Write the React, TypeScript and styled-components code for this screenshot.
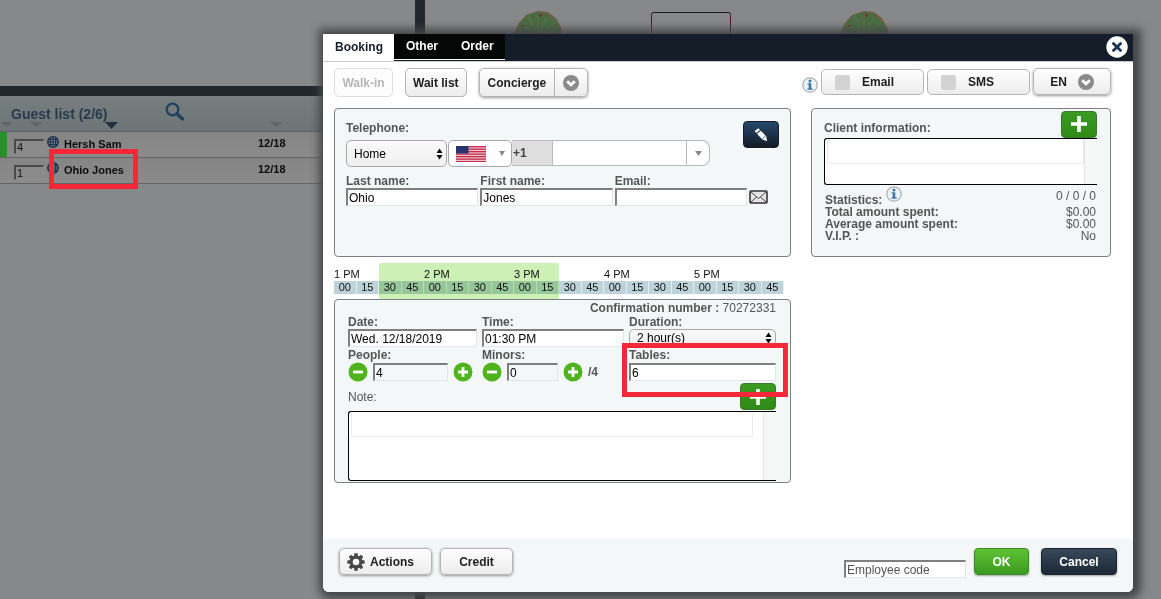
import React from "react";
import styled, { createGlobalStyle, css } from "styled-components";

const GlobalStyle = createGlobalStyle`
  *, *::before, *::after { box-sizing: border-box; }
  body {
    margin: 0;
    background: #87888a;
    color: #555;
    font-family: "Liberation Sans", Arial, Helvetica, sans-serif;
    font-size: 12px;
    line-height: 14px;
  }
  button, input, select, textarea { font: inherit; margin: 0; }
  button { cursor: pointer; }
`;

/* ---------- dimmed page ---------- */

const Page = styled.div`
  position: relative;
  display: flex;
  min-height: 100vh;
  overflow: hidden;
`;

const Sidebar = styled.aside`
  flex: 0 0 415px;
  padding-top: 86px;
`;

const Divider = styled.div`
  flex: 0 0 10px;
  background: #22272e;
`;

const Floor = styled.main`
  position: relative;
  flex: 1;
  overflow: hidden;
`;

const Cactus = styled.svg<{ $x: number }>`
  position: absolute;
  left: ${(p) => p.$x}px;
  top: 10px;
`;

const FloorTable = styled.div`
  position: absolute;
  left: 226px;
  top: 12px;
  width: 80px;
  height: 60px;
  border: 1px solid #1c1c20;
  border-radius: 3px;
  border-left-color: #4a1c26;
  border-right-color: #4a1c26;
`;

const GuestHeader = styled.header`
  height: 46px;
  padding-top: 10px;
  border-top: 10px solid #22272e;
  border-bottom: 1px solid #5b5f60;
  background: linear-gradient(#767e80, #6d7576);
`;

const GuestTitleRow = styled.div`
  display: flex;
  align-items: flex-start;
  gap: 58px;
  height: 16px;
  padding-left: 11px;
`;

const GuestTitle = styled.h2`
  margin: 0;
  color: #29394c;
  font-size: 14px;
  line-height: 16px;
`;

const IconButton = styled.button`
  display: inline-flex;
  flex: none;
  padding: 0;
  border: 0;
  background: none;
`;

const SearchButton = styled(IconButton)`
  height: 20px;
  margin-top: -4px;
`;

const SortRow = styled.div`
  display: grid;
  grid-template-columns: 30px 75px 165px 1fr;
`;

const SortMark = styled.span<{ $active?: boolean }>`
  width: 13px;
  height: ${(p) => (p.$active ? 7 : 5)}px;
  clip-path: polygon(0 0, 100% 0, 50% 100%);
  background: ${(p) => (p.$active ? "#232f3d" : "#5f6769")};
`;

const GuestTable = styled.table`
  width: 100%;
  border-collapse: separate;
  border-spacing: 0;
  table-layout: fixed;
  color: #0c0c0e;
  font-size: 11px;
  font-weight: bold;
  td {
    height: 26px;
    padding: 0;
    border-bottom: 1px solid #626466;
    background: linear-gradient(#858585, #8b8b8b);
    vertical-align: middle;
  }
  td:nth-child(n + 3) { padding-bottom: 3px; }
`;

const StatusBar = styled.div<{ $on: boolean }>`
  width: 7px;
  height: 25px;
  background: ${(p) => (p.$on ? "#26902a" : "transparent")};
`;

const PartyInput = styled.input`
  display: block;
  width: 30px;
  height: 15px;
  margin-top: 3px;
  padding: 0 1px;
  border: solid;
  border-width: 2px 1px 1px 2px;
  border-color: #4a4a4a #8f8f8f #8f8f8f #4a4a4a;
  background: #8a8a8a;
  color: #111;
  font-weight: normal;
`;

const NameCell = styled.div`
  position: relative;
  display: flex;
  align-items: center;
  gap: 5px;
  padding-left: 1px;
  svg { margin-bottom: 2px; }
  span { padding-top: 2px; }
`;

const GuestCallout = styled.div`
  position: absolute;
  left: 3px;
  top: -12px;
  width: 89px;
  height: 40px;
  border: 5px solid #f52839;
`;

/* ---------- dialog ---------- */

const Overlay = styled.div`
  position: absolute;
  inset: 0;
  padding: 34px 28px 7px 323px;
`;

const Dialog = styled.section`
  overflow: hidden;
  border-radius: 0 0 6px 6px;
  background: #fff;
`;

const Shadow = styled.div`
  border-radius: 0 0 6px 6px;
  box-shadow: 2px 1px 8px 6px #454648;
`;

const TitleBar = styled.header`
  display: flex;
  height: 28px;
  padding-right: 5px;
  border-bottom: 1px solid #c9cbcd;
  background: #141d28;
`;

const Tab = styled.button<{ $active?: boolean }>`
  height: ${(p) => (p.$active ? 27 : 26)}px;
  padding: 0 11px 2px 12px;
  border: 0;
  border-bottom: ${(p) => (p.$active ? "0" : "1px solid #fff")};
  background: ${(p) => (p.$active ? "#fff" : "#050707")};
  color: ${(p) => (p.$active ? "#141d28" : "#fff")};
  font-weight: bold;
`;

const CloseButton = styled(IconButton)`
  margin: 2px 0 0 auto;
`;

const Body = styled.div`
  padding: 6px 22px 56px 11px;
`;

const Toolbar = styled.div`
  display: flex;
  align-items: flex-start;
  gap: 12px;
  height: 40px;
`;

const ToolbarRight = styled.div`
  display: flex;
  align-items: flex-start;
  gap: 3px;
  margin-left: auto;
  > button:first-child { margin-top: 9px; }
`;

const raised = css`
  border: 1px solid #b4b4b4;
  border-radius: 5px;
  background: linear-gradient(#fff, #ececec);
  color: #1d1d1d;
  font-weight: bold;
`;

const Button = styled.button<{ $raised?: boolean }>`
  ${raised}
  display: inline-flex;
  align-items: center;
  justify-content: center;
  gap: 11px;
  min-width: 59px;
  height: 29px;
  padding: 0 7px;
  box-shadow: ${(p) => (p.$raised ? "0 1px 3px rgba(0,0,0,.4)" : "none")};
  &:disabled {
    border-color: #dedede;
    color: #b5b5b5;
    background: #fdfdfd;
  }
`;

const LanguageButton = styled(Button)`
  width: 78px;
  height: 27px;
`;

const SplitButton = styled.div`
  ${raised}
  display: flex;
  height: 29px;
  box-shadow: 0 1px 3px rgba(0, 0, 0, 0.4);
  button {
    display: flex;
    align-items: center;
    justify-content: center;
    padding: 0 8px;
    border: 0;
    background: none;
    color: inherit;
    font-weight: bold;
  }
  button + button { width: 33px; border-left: 1px solid #b4b4b4; }
`;

const Toggle = styled.label`
  ${raised}
  display: flex;
  align-items: center;
  gap: 12px;
  width: 103px;
  height: 26px;
  margin-top: 1px;
  padding-left: 13px;
`;

const ToggleBox = styled.input`
  appearance: none;
  width: 15px;
  height: 15px;
  border-radius: 2px;
  background: #d3d3d3;
`;

const Columns = styled.div`
  display: grid;
  grid-template-columns: minmax(0, 1fr) 300px;
  gap: 20px;
  align-items: start;
`;

const Panel = styled.section<{ $pad: string }>`
  padding: ${(p) => p.$pad};
  border: 1px solid #7d8082;
  border-radius: 4px;
  background: #f3f7f7;
`;

const InfoPanel = styled(Panel)`
  min-height: 149px;
`;

const Label = styled.label`
  display: block;
  font-weight: bold;
  white-space: nowrap;
`;

const NoteLabel = styled(Label)`
  font-weight: normal;
`;

const TextInput = styled.input<{ $tint?: boolean }>`
  display: block;
  flex: 1;
  width: 100%;
  min-width: 0;
  height: 18px;
  padding: 0 1px;
  border: solid;
  border-width: 2px 1px 1px 2px;
  border-color: #7f7f7f #e3e6e6 #e3e6e6 #7f7f7f;
  background: ${(p) => (p.$tint ? "#f3f7f7" : "#fff")};
  color: #000;
  &::placeholder { color: #555; opacity: 1; }
`;

const PhoneBlock = styled.div`
  display: flex;
  align-items: flex-start;
  gap: 33px;
`;

const PhoneFields = styled.div`
  flex: 1;
  min-width: 0;
`;

const PhoneRow = styled.div`
  display: flex;
  height: 27px;
  margin-top: 5px;
`;

const SelectWrap = styled.div<{ $width?: number }>`
  position: relative;
  flex: none;
  width: ${(p) => (p.$width ? `${p.$width}px` : "100%")};
  svg {
    position: absolute;
    top: 50%;
    right: 4px;
    transform: translateY(-50%);
    pointer-events: none;
  }
`;

const Select = styled.select<{ $height: number }>`
  appearance: none;
  display: block;
  width: 100%;
  height: ${(p) => p.$height}px;
  padding: 0 7px;
  border: 1px solid #a6a8aa;
  border-radius: 5px;
  background: linear-gradient(#fafafa, #efefef);
  color: #000;
  line-height: 14px;
`;

const CountryButton = styled.button`
  display: flex;
  align-items: center;
  justify-content: space-between;
  width: 64px;
  margin-left: 1px;
  padding: 0 6px 0 7px;
  border: 1px solid #a6a8aa;
  border-radius: 5px;
  background: #fff;
`;

const DialCode = styled.div`
  width: 41px;
  height: 26px;
  padding-left: 1px;
  border: 1px solid #bcbcbc;
  border-left: 0;
  background: #dedede;
  color: #444;
  font-weight: bold;
  line-height: 24px;
`;

const NumberInput = styled.input`
  flex: 1;
  min-width: 0;
  height: 26px;
  padding: 0 6px;
  border: 1px solid #b4b8b8;
  border-left: 0;
  background: #fff;
`;

const NumberMenu = styled.button`
  display: flex;
  align-items: center;
  justify-content: center;
  width: 23px;
  height: 26px;
  padding: 0;
  border: 1px solid #b4b8b8;
  border-left: 0;
  border-radius: 0 8px 8px 0;
  background: #fff;
`;

const SquareButton = styled.button<{ $tone: "navy" | "green" }>`
  display: flex;
  flex: none;
  align-items: center;
  justify-content: center;
  width: 36px;
  height: 27px;
  padding: 0;
  border: 1px solid ${(p) => (p.$tone === "navy" ? "#131c28" : "#3a7a28")};
  border-radius: 4px;
  background: ${(p) =>
    p.$tone === "navy" ? "linear-gradient(#26476a, #141c27)" : "linear-gradient(#3a9a22, #2e8b17)"};
`;

const NameRow = styled.div`
  display: grid;
  grid-template-columns: repeat(3, minmax(0, 1fr)) 19px;
  gap: 2px;
  align-items: end;
  margin: 7px 11px 0 0;
`;

const MailButton = styled(IconButton)`
  padding-bottom: 2px;
`;

const ClientHead = styled.div`
  display: flex;
  align-items: center;
  justify-content: space-between;
  height: 28px;
`;

const ClientLabel = styled(Label)`
  padding-top: 8px;
`;

const NoteBox = styled.div<{ $height: number }>`
  display: flex;
  height: ${(p) => p.$height}px;
  border: 1px solid #000;
  border-right: 0;
  border-radius: 3px 0 0 3px;
  background: #fff;
`;

const NoteArea = styled.textarea<{ $height: number; $mr: number }>`
  flex: 1;
  min-width: 0;
  height: ${(p) => p.$height}px;
  margin: 0 ${(p) => p.$mr}px 0 2px;
  padding: 3px;
  border: solid #ebebeb;
  border-width: 0 1px 1px 1px;
  background: #fff;
  resize: none;
`;

const Gutter = styled.div`
  width: 13px;
  border-left: 1px solid #e2e2e2;
  background: #f6f7f7;
`;

const Stats = styled.table`
  width: 100%;
  margin-top: 1px;
  border-collapse: collapse;
  line-height: 12px;
  th { padding: 0 0 0 1px; text-align: left; }
  td { padding: 0 1px; text-align: right; }
  tr:first-child th { display: flex; align-items: flex-end; gap: 4px; height: 20px; }
  tr:first-child button { align-self: flex-start; }
`;

const Timeline = styled.div`
  display: grid;
  grid-template-columns: repeat(20, minmax(0, 1fr));
  grid-template-rows: 18px 13px 5px;
  margin: 6px 7px 0 0;
  color: #111;
  font-size: 11px;
`;

const Hour = styled.span<{ $start: number }>`
  grid-row: 1;
  grid-column: ${(p) => p.$start} / span 4;
  padding-top: 4px;
`;

const Quarter = styled.span<{ $col: number }>`
  grid-row: 2;
  grid-column: ${(p) => p.$col};
  border-right: 1px solid #e3eef0;
  background: #bdd3d9;
  line-height: 13px;
  text-align: center;
`;

const Selection = styled.div`
  grid-row: 1 / -1;
  grid-column: 3 / 11;
  z-index: 1;
  border-radius: 2px;
  background: #cdf0b6;
  mix-blend-mode: multiply;
`;

const Confirmation = styled.div`
  text-align: right;
`;

const BookingGrid = styled.div`
  display: grid;
  grid-template-columns: minmax(0, 129fr) minmax(0, 142fr) minmax(0, 147fr);
  column-gap: 5px;
  row-gap: 1px;
`;

const Field = styled.div`
  position: relative;
`;

const Stepper = styled.div<{ $end: number }>`
  display: flex;
  align-items: center;
  gap: 5px;
  height: 20px;
  padding-right: ${(p) => p.$end}px;
`;

const TablesSlot = styled.div`
  display: flex;
  align-items: center;
  height: 20px;
`;

const TablesCallout = styled.div`
  position: absolute;
  z-index: 2;
  inset: -5px -12px -15px -7px;
  border: 5px solid #f52839;
  pointer-events: none;
`;

const NoteHead = styled.div`
  display: flex;
  align-items: center;
  justify-content: space-between;
  height: 29px;
`;

const Footer = styled.footer`
  display: flex;
  align-items: flex-start;
  gap: 8px;
  height: 53px;
  padding: 9px 16px 0;
  background: #f3f7f7;
`;

const ActionsButton = styled(Button)`
  justify-content: flex-start;
  gap: 5px;
  width: 93px;
  height: 27px;
`;

const CreditButton = styled(Button)`
  width: 73px;
  height: 27px;
`;

const CodeInput = styled(TextInput)`
  flex: 0 0 122px;
  margin: 12px 0 0 auto;
`;

const SolidButton = styled.button<{ $tone: "navy" | "green"; $width: number }>`
  width: ${(p) => p.$width}px;
  height: 27px;
  padding: 0;
  border: 1px solid ${(p) => (p.$tone === "navy" ? "#1a2530" : "#3b8a24")};
  border-radius: 4px;
  background: ${(p) =>
    p.$tone === "navy" ? "linear-gradient(#38495a, #1c2836)" : "linear-gradient(#5fc234, #3a9a1e)"};
  box-shadow: 0 1px 2px rgba(0, 0, 0, 0.35);
  color: #fff;
  font-weight: bold;
  & + & { margin-left: 4px; }
`;

/* ---------- icons ---------- */

const Globe = () => (
  <svg width="12" height="12" viewBox="0 0 12 12" fill="none" stroke="#1d3148" strokeWidth="1.5" aria-hidden>
    <circle cx="6" cy="6" r="5.2" fill="#76869a" />
    <path d="M6 1v10M3.4 1.6v8.8M8.6 1.6v8.8M1 6h10M1.6 3.4h8.8M1.6 8.6h8.8" strokeWidth="1" />
  </svg>
);

const SearchIcon = () => (
  <svg width="20" height="20" viewBox="0 0 20 20" fill="none" stroke="#22405f" aria-hidden>
    <circle cx="7.5" cy="7.5" r="5.8" strokeWidth="2.3" />
    <path d="M12.4 12.2l5.2 4.8" strokeWidth="3.2" strokeLinecap="round" />
  </svg>
);

const CactusIcon = ({ x }: { x: number }) => (
  <Cactus $x={x} width="50" height="50" viewBox="0 0 50 50" aria-hidden>
    <path d="M1 24L5 14 13 5 25 1l10 1 8 6 6 11v12L40 44 25 49 9 43z" fill="#6e6044" />
    <path d="M3 25L7 14 14 5 25 2l9 2 8 6 5 9v12L39 43 25 48 10 42z" fill="#4a6b43" />
    <path d="M25 25L8 14M25 25L15 6M25 25V3M25 25L35 6M25 25L43 12M25 25L47 22" stroke="#587a4d" strokeWidth="0.8" />
    <path d="M26 4l3 1-1 2-2-1zM9 15l2 0-1 2zM19 6l1 1M34 5l1 2" fill="#6b3a33" stroke="#6b3a33" strokeWidth="0.6" />
  </Cactus>
);

const CloseIcon = () => (
  <svg width="22" height="22" viewBox="0 0 22 22" aria-hidden>
    <circle cx="11" cy="11" r="10.7" fill="#fff" />
    <path d="M7.4 7.6l7.2 6.8M14.6 7.6l-7.2 6.8" stroke="#1b3351" strokeWidth="2.8" strokeLinecap="round" />
  </svg>
);

const ChevronIcon = () => (
  <svg width="16" height="16" viewBox="0 0 16 16" aria-hidden>
    <circle cx="8" cy="8" r="8" fill="#8a8a8a" />
    <path d="M4.2 6.2L8 9.8l3.8-3.6" fill="none" stroke="#fff" strokeWidth="2.8" />
  </svg>
);

const InfoIcon = () => (
  <svg width="16" height="16" viewBox="0 0 16 16" aria-hidden>
    <circle cx="8" cy="8" r="7.2" fill="#edf3f6" stroke="#a9b4b8" strokeWidth="1.3" />
    <circle cx="8" cy="4" r="1.5" fill="#3f76a3" />
    <path d="M5.6 6.2h3.7v5.2h1.4v1.4H5.4v-1.4h1.3V7.6H5.6z" fill="#3f76a3" />
  </svg>
);

const PencilIcon = () => (
  <svg width="16" height="16" viewBox="0 0 16 16" aria-hidden>
    <path d="M1.6 4L5.4 1.2 7 2.9 3.3 5.9z" fill="#fff" />
    <path d="M4 6.8L7.9 3.7l5.2 5.5L14.2 14.2 9 12.2z" fill="#fff" />
    <path d="M9.4 11.6l3.2-2.6" stroke="#1b3048" strokeWidth="0.7" />
  </svg>
);

const PlusIcon = () => (
  <svg width="18" height="18" viewBox="0 0 18 18" aria-hidden>
    <path d="M9 1v16M1 9h16" stroke="#fff" strokeWidth="3.6" />
  </svg>
);

const RoundIcon = ({ plus }: { plus?: boolean }) => (
  <svg width="20" height="20" viewBox="0 0 20 20" aria-hidden>
    <circle cx="10" cy="10" r="9.5" fill="#4fb31c" />
    <path d={plus ? "M5 10h10M10 5v10" : "M5 10h10"} stroke="#fff" strokeWidth="2.8" />
  </svg>
);

const UpDownIcon = () => (
  <svg width="7" height="12" viewBox="0 0 7 12" fill="#000" aria-hidden>
    <path d="M0.5 5L3.5 0.5 6.5 5zM0.5 7L3.5 11.5 6.5 7z" />
  </svg>
);

const DownIcon = ({ width = 6 }: { width?: number }) => (
  <svg width={width} height="5" viewBox="0 0 6 5" preserveAspectRatio="none" fill="#8a8a8a" aria-hidden>
    <path d="M0 0h6L3 5z" />
  </svg>
);

const FlagIcon = () => (
  <svg width="30" height="16" viewBox="0 0 30 16" aria-hidden>
    <rect width="30" height="16" fill="#efc3cd" />
    {[0, 2.5, 5, 7.5, 10, 12.5, 15].map((y) => (
      <rect key={y} y={y} width="30" height="1.3" fill="#c32f4b" />
    ))}
    <rect width="12.5" height="7.5" fill="#28346b" />
  </svg>
);

const MailIcon = () => (
  <svg width="19" height="14" viewBox="0 0 19 14" fill="none" stroke="#333" aria-hidden>
    <rect x="1" y="1" width="17" height="12" rx="1" fill="#e4e4e4" strokeWidth="1.6" />
    <path d="M2 2l7.5 6.5L17 2M2 12l5.5-5M17 12l-5.5-5" strokeWidth="0.9" />
  </svg>
);

const GearIcon = () => (
  <svg width="18" height="18" viewBox="0 0 18 18" aria-hidden>
    <g fill="#484848">
      {[0, 45, 90, 135, 180, 225, 270, 315].map((a) => (
        <path key={a} d="M7 3.6L7.4 0.3h3.2l.4 3.3z" transform={`rotate(${a} 9 9)`} />
      ))}
    </g>
    <circle cx="9" cy="9" r="4.9" fill="none" stroke="#484848" strokeWidth="3.2" />
  </svg>
);

/* ---------- data ---------- */

const guests = [
  { party: "4", name: "Hersh Sam", date: "12/18", seated: true, marked: false },
  { party: "1", name: "Ohio Jones", date: "12/18", seated: false, marked: true },
];

const hours = ["1 PM", "2 PM", "3 PM", "4 PM", "5 PM"];
const quarters = ["00", "15", "30", "45"];

const totals = [
  ["Total amount spent:", "$0.00"],
  ["Average amount spent:", "$0.00"],
  ["V.I.P. :", "No"],
];

/* ---------- sections ---------- */

const StatusCol = styled.col`
  width: 14px;
`;

const PartyCol = styled.col`
  width: 32px;
`;

const DateCol = styled.col`
  width: 157px;
`;

function GuestList() {
  return (
    <Sidebar>
      <GuestHeader>
        <GuestTitleRow>
          <GuestTitle>Guest list (2/6)</GuestTitle>
          <SearchButton aria-label="Search guests"><SearchIcon /></SearchButton>
        </GuestTitleRow>
        <SortRow>
          <SortMark />
          <SortMark />
          <SortMark $active />
          <SortMark />
        </SortRow>
      </GuestHeader>
      <GuestTable>
        <colgroup>
          <StatusCol />
          <PartyCol />
          <col />
          <DateCol />
        </colgroup>
        <tbody>
          {guests.map((g) => (
            <tr key={g.name}>
              <td><StatusBar $on={g.seated} /></td>
              <td><PartyInput aria-label={`Party size, ${g.name}`} defaultValue={g.party} /></td>
              <td>
                <NameCell>
                  <Globe />
                  <span>{g.name}</span>
                  {g.marked && <GuestCallout />}
                </NameCell>
              </td>
              <td>{g.date}</td>
            </tr>
          ))}
        </tbody>
      </GuestTable>
    </Sidebar>
  );
}

function GuestPanel() {
  return (
    <InfoPanel $pad="12px 11px 0">
      <PhoneBlock>
        <PhoneFields>
          <Label htmlFor="phone">Telephone:</Label>
          <PhoneRow>
            <SelectWrap $width={101}>
              <Select $height={27} aria-label="Telephone type" defaultValue="Home">
                <option>Home</option>
                <option>Mobile</option>
              </Select>
              <UpDownIcon />
            </SelectWrap>
            <CountryButton aria-label="Country">
              <FlagIcon />
              <DownIcon />
            </CountryButton>
            <DialCode>+1</DialCode>
            <NumberInput id="phone" type="tel" />
            <NumberMenu aria-label="Other numbers"><DownIcon width={7} /></NumberMenu>
          </PhoneRow>
        </PhoneFields>
        <SquareButton $tone="navy" aria-label="Edit guest"><PencilIcon /></SquareButton>
      </PhoneBlock>
      <NameRow>
        <div>
          <Label htmlFor="last">Last name:</Label>
          <TextInput id="last" defaultValue="Ohio" />
        </div>
        <div>
          <Label htmlFor="first">First name:</Label>
          <TextInput id="first" defaultValue="Jones" />
        </div>
        <div>
          <Label htmlFor="email">Email:</Label>
          <TextInput id="email" type="email" />
        </div>
        <MailButton aria-label="Send email"><MailIcon /></MailButton>
      </NameRow>
    </InfoPanel>
  );
}

function ClientPanel() {
  return (
    <InfoPanel $pad="1px 13px 0 12px">
      <ClientHead>
        <ClientLabel htmlFor="client">Client information:</ClientLabel>
        <SquareButton $tone="green" aria-label="Add client information"><PlusIcon /></SquareButton>
      </ClientHead>
      <NoteBox $height={47}>
        <NoteArea id="client" $height={25} $mr={0} />
        <Gutter />
      </NoteBox>
      <Stats>
        <tbody>
          <tr>
            <th scope="row">
              Statistics:
              <IconButton aria-label="About statistics"><InfoIcon /></IconButton>
            </th>
            <td>0 / 0 / 0</td>
          </tr>
          {totals.map(([name, value]) => (
            <tr key={name}>
              <th scope="row">{name}</th>
              <td>{value}</td>
            </tr>
          ))}
        </tbody>
      </Stats>
    </InfoPanel>
  );
}

function TimeStrip() {
  return (
    <Timeline>
      {hours.map((h, i) => (
        <React.Fragment key={h}>
          <Hour $start={i * 4 + 1}>{h}</Hour>
          {quarters.map((q, j) => (
            <Quarter key={q} $col={i * 4 + j + 1}>{q}</Quarter>
          ))}
        </React.Fragment>
      ))}
      <Selection />
    </Timeline>
  );
}

function BookingPanel() {
  return (
    <Panel $pad="1px 14px 1px 13px">
      <Confirmation><b>Confirmation number :</b> 70272331</Confirmation>
      <BookingGrid>
        <Field>
          <Label htmlFor="date">Date:</Label>
          <TextInput id="date" defaultValue="Wed. 12/18/2019" />
        </Field>
        <Field>
          <Label htmlFor="time">Time:</Label>
          <TextInput id="time" defaultValue="01:30 PM" />
        </Field>
        <Field>
          <Label htmlFor="duration">Duration:</Label>
          <SelectWrap>
            <Select id="duration" $height={17} defaultValue="2 hour(s)">
              <option>2 hour(s)</option>
              <option>3 hour(s)</option>
            </Select>
            <UpDownIcon />
          </SelectWrap>
        </Field>
        <Field>
          <Label htmlFor="people">People:</Label>
          <Stepper $end={4}>
            <IconButton aria-label="Fewer people"><RoundIcon /></IconButton>
            <TextInput id="people" $tint defaultValue="4" />
            <IconButton aria-label="More people"><RoundIcon plus /></IconButton>
          </Stepper>
        </Field>
        <Field>
          <Label htmlFor="minors">Minors:</Label>
          <Stepper $end={26}>
            <IconButton aria-label="Fewer minors"><RoundIcon /></IconButton>
            <TextInput id="minors" $tint defaultValue="0" />
            <IconButton aria-label="More minors"><RoundIcon plus /></IconButton>
            <b>/4</b>
          </Stepper>
        </Field>
        <Field>
          <Label htmlFor="tables">Tables:</Label>
          <TablesSlot><TextInput id="tables" defaultValue="6" /></TablesSlot>
          <TablesCallout />
        </Field>
      </BookingGrid>
      <NoteHead>
        <NoteLabel htmlFor="note">Note:</NoteLabel>
        <SquareButton $tone="green" aria-label="Add note"><PlusIcon /></SquareButton>
      </NoteHead>
      <NoteBox $height={70}>
        <NoteArea id="note" $height={25} $mr={10} />
        <Gutter />
      </NoteBox>
    </Panel>
  );
}

export default function App() {
  return (
    <>
      <GlobalStyle />
      <Page>
        <GuestList />
        <Divider />
        <Floor>
          <CactusIcon x={88} />
          <FloorTable />
          <CactusIcon x={414} />
        </Floor>
        <Overlay>
          <Shadow>
            <Dialog role="dialog" aria-label="Booking">
              <TitleBar>
                <Tab $active>Booking</Tab>
                <Tab>Other</Tab>
                <Tab>Order</Tab>
                <CloseButton aria-label="Close"><CloseIcon /></CloseButton>
              </TitleBar>
              <Body>
                <Toolbar>
                  <Button disabled>Walk-in</Button>
                  <Button>Wait list</Button>
                  <SplitButton>
                    <button>Concierge</button>
                    <button aria-label="Concierge options"><ChevronIcon /></button>
                  </SplitButton>
                  <ToolbarRight>
                    <IconButton aria-label="About notifications"><InfoIcon /></IconButton>
                    <Toggle><ToggleBox type="checkbox" />Email</Toggle>
                    <Toggle><ToggleBox type="checkbox" />SMS</Toggle>
                    <LanguageButton $raised>EN<ChevronIcon /></LanguageButton>
                  </ToolbarRight>
                </Toolbar>
                <Columns>
                  <div>
                    <GuestPanel />
                    <TimeStrip />
                    <BookingPanel />
                  </div>
                  <ClientPanel />
                </Columns>
              </Body>
              <Footer>
                <ActionsButton $raised><GearIcon />Actions</ActionsButton>
                <CreditButton $raised>Credit</CreditButton>
                <CodeInput aria-label="Employee code" placeholder="Employee code" />
                <SolidButton $tone="green" $width={55}>OK</SolidButton>
                <SolidButton $tone="navy" $width={76}>Cancel</SolidButton>
              </Footer>
            </Dialog>
          </Shadow>
        </Overlay>
      </Page>
    </>
  );
}
